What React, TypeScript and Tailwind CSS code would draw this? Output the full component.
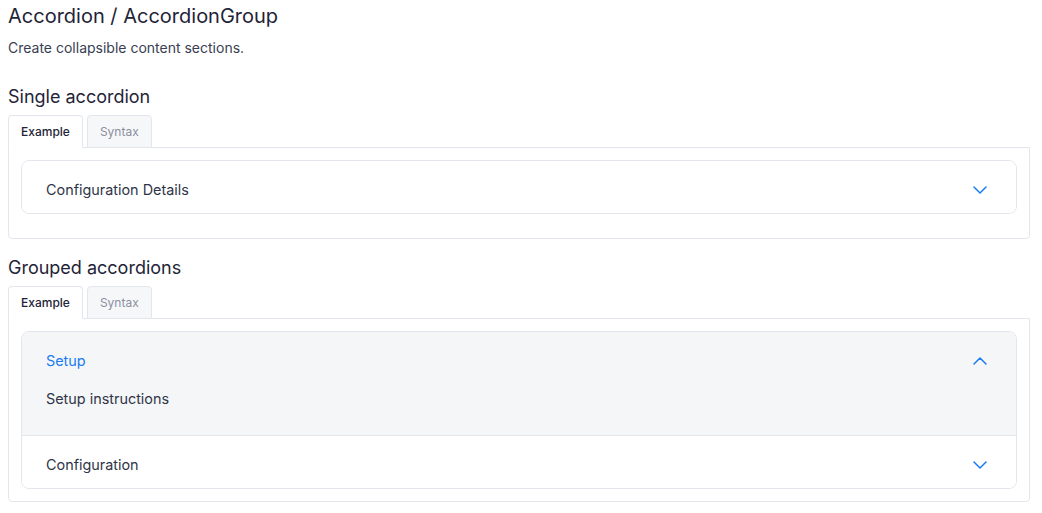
import { useState } from 'react';

const blue = 'text-[#1a7cf2]';

function Chevron({ up }: { up?: boolean }) {
  return (
    <svg width="14" height="8" viewBox="0 0 14 8" fill="none" className={blue}>
      <path
        d={up ? 'M1 7l6-6 6 6' : 'M1 1l6 6 6-6'}
        stroke="currentColor"
        strokeWidth="1.5"
        strokeLinecap="round"
        strokeLinejoin="round"
      />
    </svg>
  );
}

function Tabs() {
  return (
    <div className="mt-1 flex gap-[4px]">
      <div className="relative z-10 -mb-px rounded-t border border-b-white border-[#e4e6ee] bg-white px-3 pt-[8px] pb-[7px] text-xs font-medium text-[#1f2437]">
        Example
      </div>
      <div className="-mb-px rounded-t border border-[#e4e6ee] bg-[#f6f7f9] px-3 pt-[8px] pb-[7px] text-xs text-[#8b8fa0]">
        Syntax
      </div>
    </div>
  );
}

type Item = { title: string; body: string };

function AccordionItem({ item, open, onToggle, last }: { item: Item; open: boolean; onToggle: () => void; last?: boolean }) {
  return (
    <div className={`${open ? 'bg-[#f5f6f8]' : 'bg-white'} ${last ? '' : 'border-b border-[#e4e6ee]'}`}>
      <button
        type="button"
        onClick={onToggle}
        className="flex w-full items-center justify-between pt-[17px] pb-[11px] pl-6 pr-[29px] text-left text-[14.4px] leading-6"
      >
        <span className={open ? blue : 'text-[#2f3548]'}>{item.title}</span>
        <Chevron up={open} />
      </button>
      {open && <div className="px-6 pt-[3px] pb-6 text-[14.4px] leading-6 text-[#2f3548]">{item.body}</div>}
    </div>
  );
}

function AccordionGroup({ items, initial }: { items: Item[]; initial: number | null }) {
  const [open, setOpen] = useState<number | null>(initial);
  return (
    <div className="overflow-hidden rounded-lg border border-[#e4e6ee]">
      {items.map((it, i) => (
        <AccordionItem
          key={it.title}
          item={it}
          open={open === i}
          last={i === items.length - 1}
          onToggle={() => setOpen(open === i ? null : i)}
        />
      ))}
    </div>
  );
}

export default function App() {
  return (
    <div className="bg-white pl-2 pr-3 pt-[2px] font-['Inter',sans-serif] text-[#1f2437]">
      <h1 className="text-xl leading-7">Accordion / AccordionGroup</h1>
      <p className="mt-[8px] text-sm leading-5 text-[#3a4052]">Create collapsible content sections.</p>

      <h2 className="mt-[25px] text-lg leading-7">Single accordion</h2>
      <Tabs />
      <div className="rounded-b border border-[#e4e6ee] p-3 pb-6">
        <AccordionGroup items={[{ title: 'Configuration Details', body: 'Configuration details content' }]} initial={null} />
      </div>

      <h2 className="mt-[15px] text-lg leading-7">Grouped accordions</h2>
      <Tabs />
      <div className="rounded-b border border-[#e4e6ee] p-3">
        <AccordionGroup
          items={[
            { title: 'Setup', body: 'Setup instructions' },
            { title: 'Configuration', body: 'Configuration instructions' },
          ]}
          initial={0}
        />
      </div>
    </div>
  );
}
